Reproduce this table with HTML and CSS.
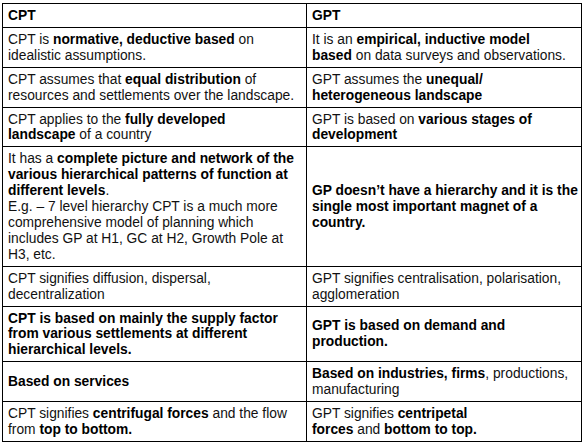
FILE: index.html
```html
<!DOCTYPE html>
<html>
<head>
<meta charset="utf-8">
<link rel="stylesheet" href="styles.css">
</head>
<body>
<table class="cmp">
  <colgroup><col class="c1"><col class="c2"></colgroup>
  <tr class="head"><td><b>CPT</b></td><td><b>GPT</b></td></tr>
  <tr><td>CPT is <b>normative, deductive based</b> on<br>idealistic assumptions.</td>
      <td>It is an <b>empirical, inductive model</b><br><b>based</b> on data surveys and observations.</td></tr>
  <tr><td>CPT assumes that <b>equal distribution</b> of<br>resources and settlements over the landscape.</td>
      <td>GPT assumes the <b>unequal/</b><br><b>heterogeneous landscape</b></td></tr>
  <tr><td>CPT applies to the <b>fully developed</b><br><b>landscape</b> of a country</td>
      <td>GPT is based on <b>various stages of</b><br><b>development</b></td></tr>
  <tr><td>It has a <b>complete picture and network of the</b><br><b>various hierarchical patterns of function at</b><br><b>different levels</b>.<br>E.g. – 7 level hierarchy CPT is a much more<br>comprehensive model of planning which<br>includes GP at H1, GC at H2, Growth Pole at<br>H3, etc.</td>
      <td><b>GP doesn’t have a hierarchy and it is the</b><br><b>single most important magnet of a</b><br><b>country.</b></td></tr>
  <tr><td>CPT signifies diffusion, dispersal,<br>decentralization</td>
      <td>GPT signifies centralisation, polarisation,<br>agglomeration</td></tr>
  <tr><td><b>CPT is based on mainly the supply factor</b><br><b>from various settlements at different</b><br><b>hierarchical levels.</b></td>
      <td><b>GPT is based on demand and</b><br><b>production.</b></td></tr>
  <tr><td><b>Based on services</b></td>
      <td><b>Based on industries, firms</b>, productions,<br>manufacturing</td></tr>
  <tr><td>CPT signifies <b>centrifugal forces</b> and the flow<br>from <b>top to bottom.</b></td>
      <td>GPT signifies <b>centripetal</b><br><b>forces</b> and <b>bottom to top.</b></td></tr>
</table>
</body>
</html>
```
FILE: styles.css
```css
html, body {
  margin: 0;
  padding: 0;
  background: #fff;
}
body {
  padding: 3px 0 0 2px;
  font-family: "Liberation Sans", Arial, sans-serif;
  font-size: 13.8px;
  line-height: 15.9px;
  color: #111;
}
.cmp {
  border-collapse: collapse;
  table-layout: fixed;
  width: 579px;
}
.cmp .c1 { width: 304px; }
.cmp .c2 { width: 275px; }
.cmp td {
  border: 1px solid #000;
  padding: 4px 5px 3px 5px;
  vertical-align: middle;
  white-space: nowrap;
  overflow: visible;
}
.cmp b { font-weight: bold; color: #000; }
```
